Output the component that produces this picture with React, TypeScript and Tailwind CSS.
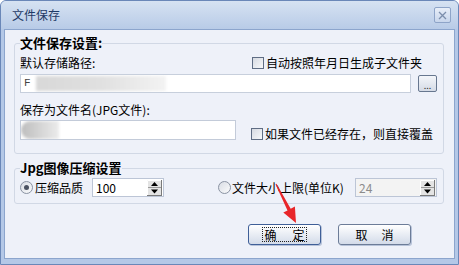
import React from "react";

function Checkbox() {
  return (
    <div className="w-[12px] h-[12px] shrink-0 border border-[#5f6d84] bg-linear-to-br from-[#d6dae2] to-[#f7f8fa]" />
  );
}

function Radio({ checked }: { checked?: boolean }) {
  return (
    <div className="w-[13px] h-[13px] shrink-0 rounded-full border border-[#8a93a3] bg-linear-to-br from-[#d9dde5] to-[#fbfbfc] flex items-center justify-center">
      {checked && <div className="w-[5px] h-[5px] rounded-full bg-[#4b5262]" />}
    </div>
  );
}

function SpinArrows() {
  return (
    <svg width="15" height="16" viewBox="0 0 15 16" className="shrink-0 mr-[1px]">
      <rect x="0" y="0" width="15" height="16" fill="#e4e4e4" />
      <path d="M0 0H15M0 0V16" stroke="#ffffff" strokeWidth="1" transform="translate(0.5 0.5)" />
      <path d="M14.5 0V16M0 15.5H15" stroke="#7a7a7a" strokeWidth="1" />
      <path d="M1 7.5H14" stroke="#9a9a9a" strokeWidth="1" />
      <path d="M7.5 2 L11 6 L4 6 Z" fill="#000" />
      <path d="M4 9.5 L11 9.5 L7.5 13.5 Z" fill="#000" />
    </svg>
  );
}

function Spin({ value, width, disabled }: { value: string; width: string; disabled?: boolean }) {
  return (
    <div
      className={`flex items-center h-[19px] border border-[#bcc5d6] pl-[3px] ${width} ${
        disabled ? "bg-[#f3f3f3] text-[#8c8c8c]" : "bg-white text-black"
      }`}
    >
      <span className="flex-1 text-[12px] leading-[14px]">{value}</span>
      <SpinArrows />
    </div>
  );
}

export default function App() {
  return (
    <div className="w-[459px] h-[265px] overflow-hidden bg-white font-['Noto_Sans_CJK_SC',sans-serif] text-[12px] text-black">
      <div className="relative w-full h-full flex flex-col rounded-t-[6px] border border-[#6a87b8] bg-[#b4c8e7]">
        {/* Title bar */}
        <div className="h-[28px] shrink-0 flex items-center justify-between pl-[11px] pr-[7px] rounded-t-[5px] bg-linear-to-b from-[#d6e2f2] to-[#b8cbe7]">
          <span className="text-[12px] leading-[14px] text-[#1f3a66]">文件保存</span>
          <div className="w-[17px] h-[16px] border border-[#8ea4c8] rounded-[2px] bg-linear-to-b from-[#e8eef8] to-[#c8d6ec] flex items-center justify-center">
            <svg width="9" height="9" viewBox="0 0 9 9">
              <path d="M1 1L8 8M8 1L1 8" stroke="#7c8eac" strokeWidth="1.3" />
            </svg>
          </div>
        </div>

        {/* Body */}
        <div className="flex-1 mx-[3px] mb-[5px] border border-[#8ca5cd] bg-[#eef1f9] pl-[9px] flex flex-col">
          {/* Group 1 */}
          <fieldset className="mt-[6px] w-[430px] border border-[#d1d8e5] rounded-[3px] px-[5px] pb-[12px]">
            <legend className="p-0 text-[13px] font-bold leading-[14px]">文件保存设置:</legend>
            <div className="mt-[5px] flex items-center h-[15px]">
              <span className="w-[232px] leading-[15px]">默认存储路径:</span>
              <Checkbox />
              <span className="ml-[2px] leading-[15px]">自动按照年月日生成子文件夹</span>
            </div>
            <div className="mt-[4px] flex items-center h-[19px]">
              <div className="w-[391px] h-[19px] border border-[#c7cfdc] bg-white flex items-center pl-[3px] overflow-hidden">
                <span className="text-[11px] leading-[13px] text-[#444] font-['Liberation_Mono',monospace]">F</span>
                <div className="ml-[5px] w-[130px] h-[15px] blur-[1.5px] bg-linear-to-r from-[#d8d8d8] via-[#e0e0e0] to-[#f3f3f3]" />
              </div>
              <div className="ml-[7px] w-[19px] h-[17px] border border-[#67778f] rounded-[2px] bg-linear-to-b from-[#f4f6fa] to-[#d5dbe6] flex items-end justify-center">
                <span className="text-[9px] leading-[10px] text-[#333]">...</span>
              </div>
            </div>
            <div className="mt-[10px] leading-[14px]">保存为文件名(JPG文件):</div>
            <div className="mt-[3px] flex items-start">
              <div className="w-[216px] h-[20px] border border-[#c3cbd9] bg-white overflow-hidden flex">
                <div className="w-[38px] h-full rounded-l-full blur-[1.5px] bg-linear-to-r from-[#bdbdbd] to-[#ececec]" />
              </div>
              <div className="ml-[15px] mt-[7px] flex items-center">
                <Checkbox />
                <span className="ml-[2px] leading-[14px]">如果文件已经存在，则直接覆盖</span>
              </div>
            </div>
          </fieldset>

          {/* Group 2 */}
          <fieldset className="mt-[7px] w-[430px] border border-[#d1d8e5] rounded-[3px] px-[5px] pb-[6px]">
            <legend className="p-0 text-[13px] font-bold leading-[14px]">Jpg图像压缩设置</legend>
            <div className="mt-[3px] flex items-center h-[19px]">
              <Radio checked />
              <span className="ml-[2px] w-[57px] leading-[14px]">压缩品质</span>
              <Spin value="100" width="w-[72px]" />
              <div className="ml-[54px] flex items-center">
                <Radio />
                <span className="ml-[1px] w-[123px] leading-[14px]">文件大小上限(单位K)</span>
              </div>
              <Spin value="24" width="w-[82px]" disabled />
            </div>
          </fieldset>

          {/* Buttons */}
          <div className="mt-[20px] flex gap-[17px] pl-[234px]">
            <div className="w-[73px] h-[21px] rounded-[3px] border border-[#3f5f98] bg-linear-to-b from-[#ffffff] to-[#d3dbe9] flex items-center justify-center shadow-[1px_1px_0_#b7c3d9]">
              <span className="flex gap-[16px] px-[1px] border border-dotted border-[#222] leading-[13px]">
                <span>确</span>
                <span>定</span>
              </span>
            </div>
            <div className="w-[73px] h-[21px] rounded-[3px] border border-[#6c7c98] bg-linear-to-b from-[#ffffff] to-[#d3dbe9] flex items-center justify-center shadow-[1px_1px_0_#b7c3d9]">
              <span className="flex gap-[14px] leading-[13px]">
                <span>取</span>
                <span>消</span>
              </span>
            </div>
          </div>
        </div>

        {/* Red annotation arrow */}
        <svg
          className="absolute left-[-1px] top-[-1px] pointer-events-none"
          width="459"
          height="265"
          viewBox="0 0 459 265"
        >
          <polygon
            points="275.5,184.3 287.5,210.4 283.3,212.6 296,223 294.9,206.6 290.7,208.8 276.5,183.7"
            fill="#e8262a"
          />
        </svg>
      </div>
    </div>
  );
}
